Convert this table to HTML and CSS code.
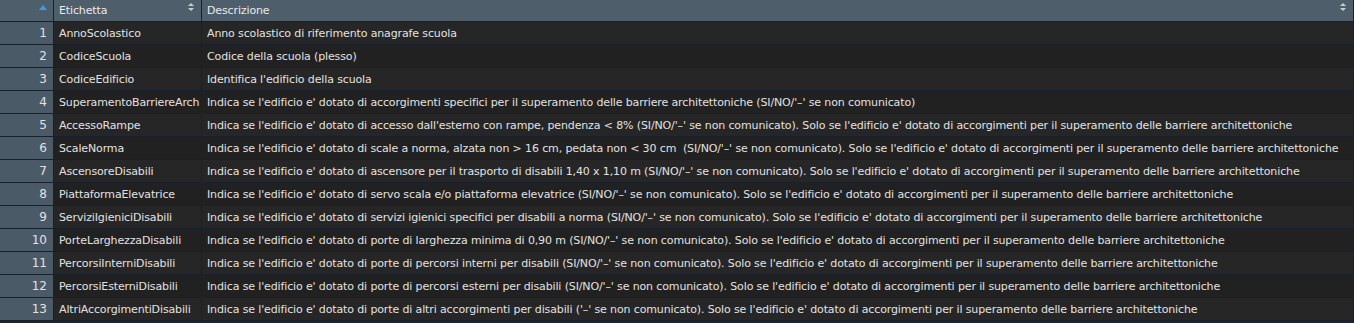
FILE: index.html
```html
<!DOCTYPE html>
<html lang="it">
<head>
<meta charset="utf-8">
<link rel="stylesheet" href="styles.css">
</head>
<body>
<table class="grid">
  <colgroup><col class="c-num"><col class="c-lab"><col class="c-desc"></colgroup>
  <thead>
    <tr>
      <th class="num"><span class="sort-up"></span></th>
      <th>Etichetta<span class="sort-both"></span></th>
      <th>Descrizione<span class="sort-both"></span></th>
    </tr>
  </thead>
  <tbody>
    <tr><td class="num">1</td><td>AnnoScolastico</td><td>Anno scolastico di riferimento anagrafe scuola</td></tr>
    <tr><td class="num">2</td><td>CodiceScuola</td><td>Codice della scuola (plesso)</td></tr>
    <tr><td class="num">3</td><td>CodiceEdificio</td><td>Identifica l'edificio della scuola</td></tr>
    <tr><td class="num">4</td><td>SuperamentoBarriereArch</td><td>Indica se l'edificio e' dotato di accorgimenti specifici per il superamento delle barriere architettoniche (SI/NO/'–' se non comunicato)</td></tr>
    <tr><td class="num">5</td><td>AccessoRampe</td><td>Indica se l'edificio e' dotato di accesso dall'esterno con rampe, pendenza &lt; 8% (SI/NO/'–' se non comunicato). Solo se l'edificio e' dotato di accorgimenti per il superamento delle barriere architettoniche</td></tr>
    <tr><td class="num">6</td><td>ScaleNorma</td><td>Indica se l'edificio e' dotato di scale a norma, alzata non &gt; 16 cm, pedata non &lt; 30 cm&nbsp; (SI/NO/'–' se non comunicato). Solo se l'edificio e' dotato di accorgimenti per il superamento delle barriere architettoniche</td></tr>
    <tr><td class="num">7</td><td>AscensoreDisabili</td><td>Indica se l'edificio e' dotato di ascensore per il trasporto di disabili 1,40 x 1,10 m (SI/NO/'–' se non comunicato). Solo se l'edificio e' dotato di accorgimenti per il superamento delle barriere architettoniche</td></tr>
    <tr><td class="num">8</td><td>PiattaformaElevatrice</td><td>Indica se l'edificio e' dotato di servo scala e/o piattaforma elevatrice (SI/NO/'–' se non comunicato). Solo se l'edificio e' dotato di accorgimenti per il superamento delle barriere architettoniche</td></tr>
    <tr><td class="num">9</td><td>ServiziIgieniciDisabili</td><td>Indica se l'edificio e' dotato di servizi igienici specifici per disabili a norma (SI/NO/'–' se non comunicato). Solo se l'edificio e' dotato di accorgimenti per il superamento delle barriere architettoniche</td></tr>
    <tr><td class="num">10</td><td>PorteLarghezzaDisabili</td><td>Indica se l'edificio e' dotato di porte di larghezza minima di 0,90 m (SI/NO/'–' se non comunicato). Solo se l'edificio e' dotato di accorgimenti per il superamento delle barriere architettoniche</td></tr>
    <tr><td class="num">11</td><td>PercorsiInterniDisabili</td><td>Indica se l'edificio e' dotato di porte di percorsi interni per disabili (SI/NO/'–' se non comunicato). Solo se l'edificio e' dotato di accorgimenti per il superamento delle barriere architettoniche</td></tr>
    <tr><td class="num">12</td><td>PercorsiEsterniDisabili</td><td>Indica se l'edificio e' dotato di porte di percorsi esterni per disabili (SI/NO/'–' se non comunicato). Solo se l'edificio e' dotato di accorgimenti per il superamento delle barriere architettoniche</td></tr>
    <tr><td class="num">13</td><td>AltriAccorgimentiDisabili</td><td>Indica se l'edificio e' dotato di porte di altri accorgimenti per disabili ('–' se non comunicato). Solo se l'edificio e' dotato di accorgimenti per il superamento delle barriere architettoniche</td></tr>
  </tbody>
</table>
</body>
</html>
```

FILE: styles.css
```css
html, body {
  margin: 0;
  padding: 0;
  background: #1b2430;
}
.grid {
  width: 1354px;
  border-collapse: separate;
  border-spacing: 0;
  table-layout: fixed;
  font-family: "DejaVu Sans", Verdana, sans-serif;
  font-size: 11px;
  letter-spacing: -0.13px;
  color: #e2e2e2;
}
.c-num { width: 54px; }
.c-lab { width: 148px; }
.grid th, .grid td {
  border-right: 1px solid #17202c;
  border-bottom: 1px solid #17202c;
  white-space: nowrap;
  overflow: hidden;
  text-align: left;
  padding: 0 5px;
}
.grid th {
  height: 21px;
  background: #4f5e6b;
  font-weight: normal;
  position: relative;
  color: #e8eaec;
}
.grid td {
  height: 22px;
  background: #262626;
}
.grid tbody tr:nth-child(even) td { background: #212121; }
.grid td.num, .grid tbody tr:nth-child(even) td.num {
  background: #4b5a67;
  text-align: right;
  padding-right: 6px;
  font-size: 12px;
  letter-spacing: 0;
}
.sort-up {
  position: absolute;
  right: 6px;
  top: 5px;
  width: 0;
  height: 0;
  border-left: 4px solid transparent;
  border-right: 4px solid transparent;
  border-bottom: 5px solid #3d9be9;
}
.sort-both {
  position: absolute;
  right: 7px;
  top: 3px;
  width: 6px;
  height: 10px;
}
.sort-both::before, .sort-both::after {
  content: "";
  position: absolute;
  left: 0;
  border-left: 3px solid transparent;
  border-right: 3px solid transparent;
}
.sort-both::before { top: 0; border-bottom: 3px solid #c8ced4; }
.sort-both::after { top: 5px; border-top: 3px solid #c8ced4; }
```
